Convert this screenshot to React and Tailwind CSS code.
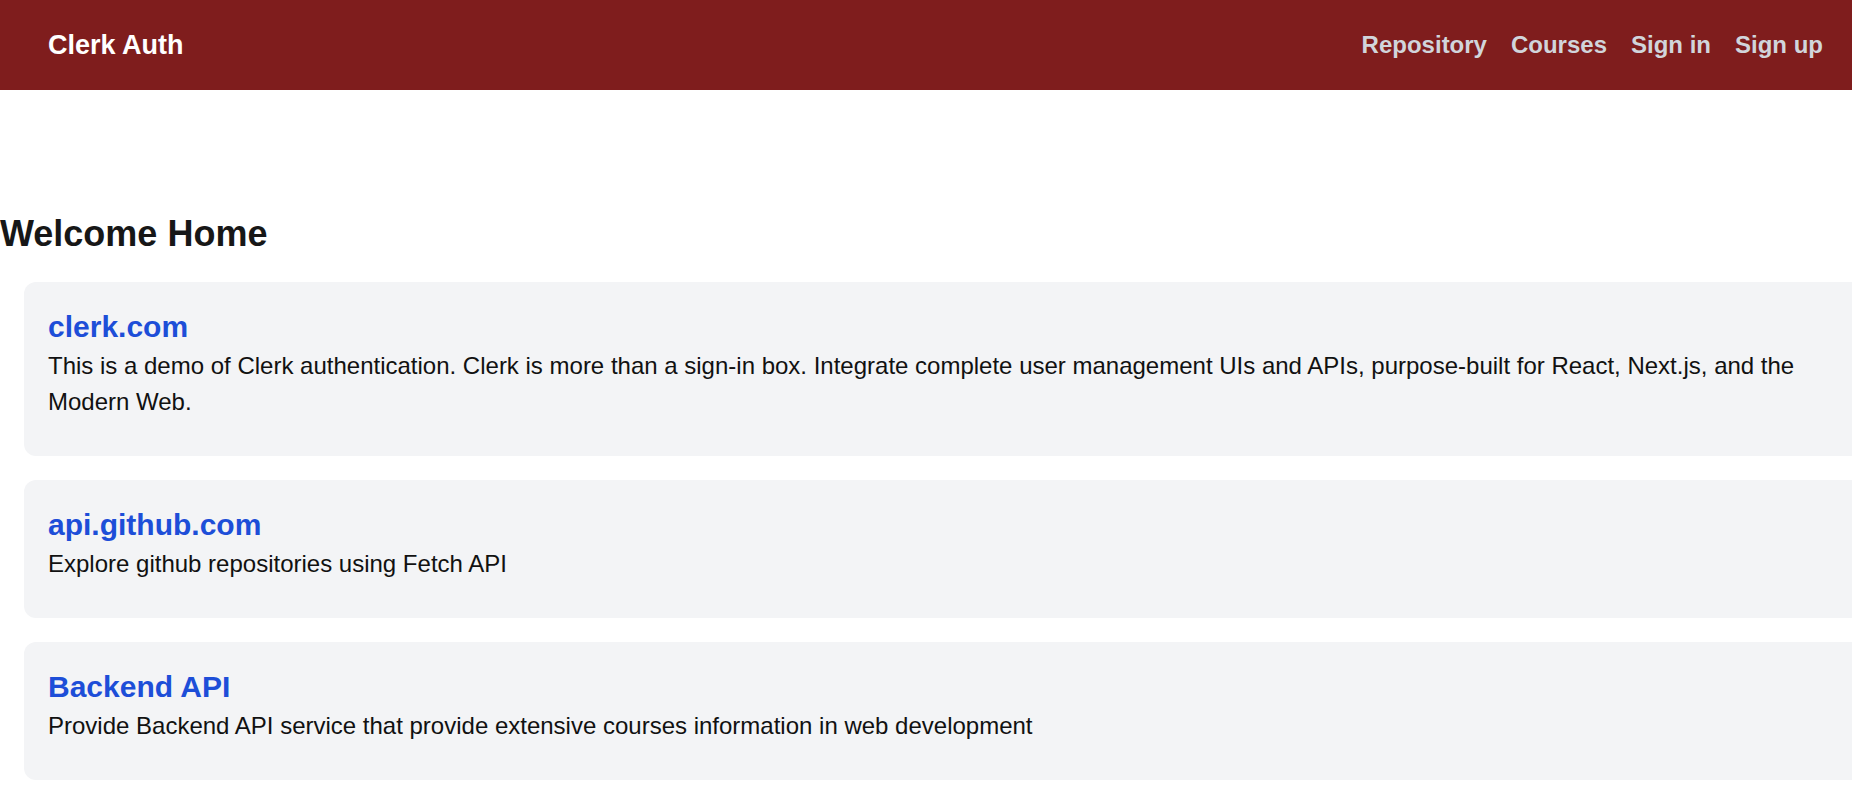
import React from 'react';

const links = ['Repository', 'Courses', 'Sign in', 'Sign up'];

const cards = [
  {
    title: 'clerk.com',
    text: 'This is a demo of Clerk authentication. Clerk is more than a sign-in box. Integrate complete user management UIs and APIs, purpose-built for React, Next.js, and the Modern Web.',
  },
  {
    title: 'api.github.com',
    text: 'Explore github repositories using Fetch API',
  },
  {
    title: 'Backend API',
    text: 'Provide Backend API service that provide extensive courses information in web development',
  },
];

export default function App() {
  return (
    <div className="w-full min-h-screen overflow-hidden bg-white font-['Liberation_Sans',Arial,sans-serif]">
      <header className="h-[90px] bg-[#7f1d1d] flex items-center justify-between pl-[48px] pr-[29px]">
        <a href="#" className="text-[27px] leading-[42px] font-bold text-white">Clerk Auth</a>
        <nav className="flex items-center gap-[24px]">
          {links.map((l) => (
            <a key={l} href="#" className="text-[24px] leading-[36px] font-bold text-[#d1d5db]">
              {l}
            </a>
          ))}
        </nav>
      </header>

      <main className="pt-[120px]">
        <h1 className="text-[36px] leading-[48px] font-bold text-[#171717] mb-[24px]">Welcome Home</h1>
        {/* cards overflow past the right edge, as in the original page */}
        <div className="w-full ml-[24px] flex flex-col gap-[24px]">
          {cards.map((c) => (
            <div key={c.title} className="bg-[#f3f4f6] rounded-[12px] px-[24px] pt-[24px] pb-[36px]">
              <h2 className="text-[30px] leading-[42px] font-bold text-[#1d4ed8]">{c.title}</h2>
              <p className="text-[24px] leading-[36px] text-[#111111]">{c.text}</p>
            </div>
          ))}
        </div>
      </main>
    </div>
  );
}
